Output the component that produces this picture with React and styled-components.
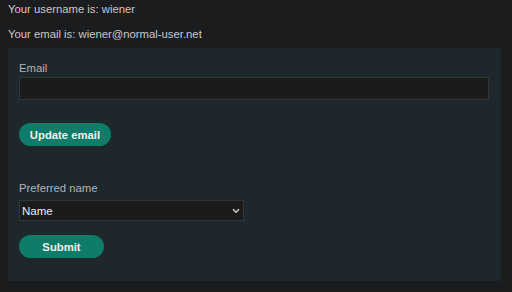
import React from "react";
import styled, { createGlobalStyle } from "styled-components";

const Global = createGlobalStyle`
  html, body { margin: 0; padding: 0; background: #1b1c1e; }
  body { font-family: "Liberation Sans", Arial, sans-serif; font-size: 11.3px; color: #c9c9c9; }
`;

const Page = styled.div`
  padding: 0 11px 12px 8px;
`;

const Info = styled.p`
  margin: 0;
  line-height: 14px;
  padding-top: ${(p) => p.$top}px;
`;

const Panel = styled.div`
  margin-top: 7px;
  background: #1d272c;
  padding: 13px 12px 23px 11px;
  display: flex;
  flex-direction: column;
`;

const Label = styled.label`
  display: block;
  color: #b4b4b4;
  font-size: 11.3px;
  line-height: 14px;
  margin-bottom: ${(p) => p.$mb}px;
`;

const TextInput = styled.input`
  box-sizing: border-box;
  display: block;
  width: 100%;
  height: 23px;
  background: #1a1b1d;
  border: 1px solid #333638;
  color: #ddd;
  outline: none;
  margin: 0;
`;

const Button = styled.button`
  align-self: flex-start;
  box-sizing: border-box;
  height: 23px;
  width: ${(p) => p.$w}px;
  border: none;
  border-radius: 12px;
  background: #0f7b69;
  color: #f0f0f0;
  font-family: "Liberation Sans", Arial, sans-serif;
  font-weight: bold;
  font-size: 11.3px;
  padding: 0;
  margin-top: ${(p) => p.$mt}px;
  cursor: pointer;
`;

const Spacer = styled.div`
  height: ${(p) => p.$h}px;
`;

const SelectWrap = styled.div`
  position: relative;
  width: 225px;
  height: 21px;
`;

const Select = styled.select`
  appearance: none;
  box-sizing: border-box;
  width: 100%;
  height: 100%;
  background: #1a1b1d;
  border: 1px solid #333638;
  color: #ececec;
  font-family: "Liberation Sans", Arial, sans-serif;
  font-size: 11.5px;
  padding: 0 0 0 2px;
  margin: 0;
  outline: none;
`;

const Chevron = styled.svg`
  position: absolute;
  right: 4px;
  top: 8px;
  pointer-events: none;
`;

export default function App() {
  return (
    <>
      <Global />
      <Page>
        <Info $top={2}>Your username is: wiener</Info>
        <Info $top={11}>Your email is: wiener@normal-user.net</Info>
        <Panel>
          <Label $mb={2}>Email</Label>
          <TextInput type="email" />
          <Button $w={92} $mt={23}>Update email</Button>
          <Spacer $h={35} />
          <Label $mb={5}>Preferred name</Label>
          <SelectWrap>
            <Select defaultValue="Name">
              <option>Name</option>
            </Select>
            <Chevron width="8" height="6" viewBox="0 0 8 6">
              <path d="M1 1.2 L4 4.2 L7 1.2" stroke="#d0d0d0" strokeWidth="1.5" fill="none" />
            </Chevron>
          </SelectWrap>
          <Button $w={85} $mt={14}>Submit</Button>
        </Panel>
      </Page>
    </>
  );
}
